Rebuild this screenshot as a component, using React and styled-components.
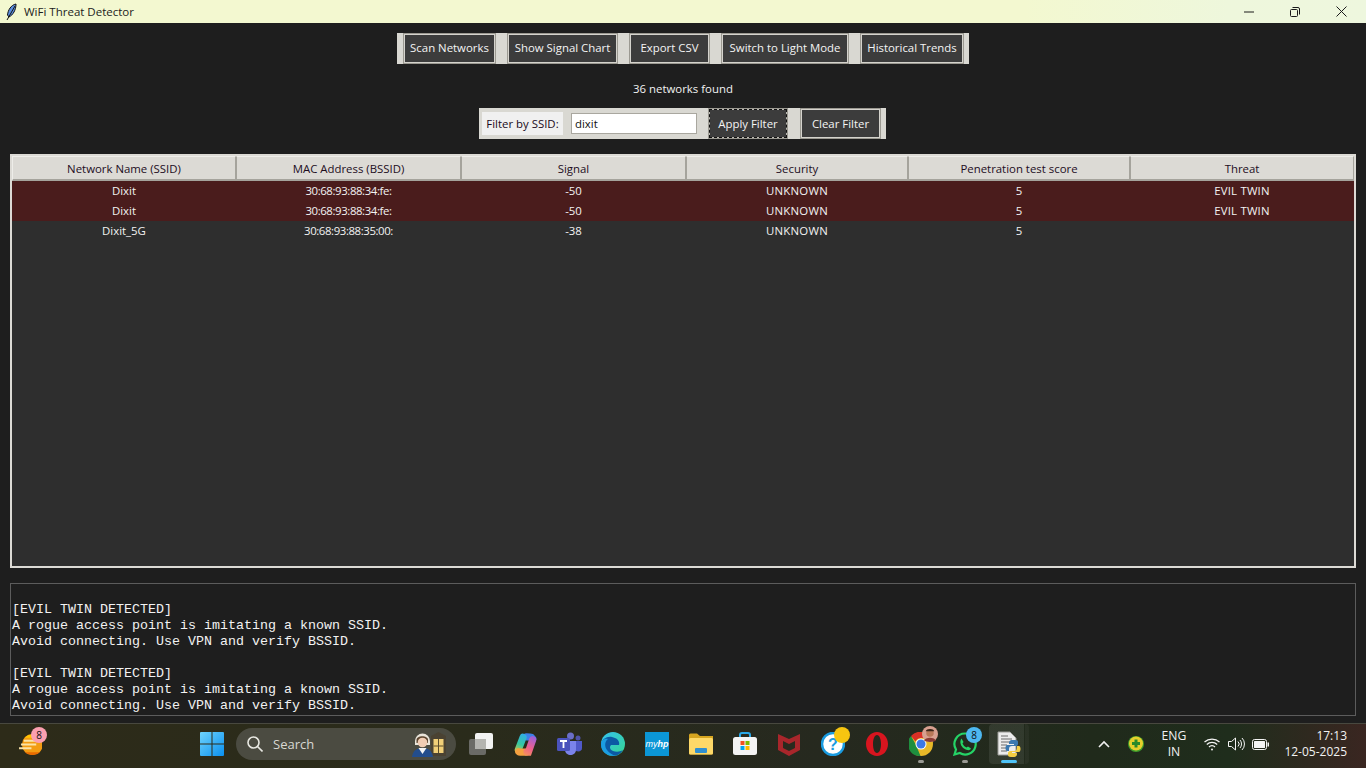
import React from 'react';
import styled, { createGlobalStyle } from 'styled-components';

const Global = createGlobalStyle`
  html, body { margin: 0; padding: 0; overflow: hidden; }
  body { font-family: "Open Sans", "Liberation Sans", sans-serif; font-size: 11.4px; }
`;

const columns = [
  { title: 'Network Name (SSID)', width: 224, spacing: 0 },
  { title: 'MAC Address (BSSID)', width: 225, spacing: -0.4 },
  { title: 'Signal', width: 225, spacing: 0 },
  { title: 'Security', width: 222, spacing: 0.25 },
  { title: 'Penetration test score', width: 222, spacing: 0 },
  { title: 'Threat', width: 224, spacing: 0.2 },
];

const rows = [
  { cells: ['Dixit', '30:68:93:88:34:fe:', '-50', 'UNKNOWN', '5', 'EVIL TWIN'], evil: true },
  { cells: ['Dixit', '30:68:93:88:34:fe:', '-50', 'UNKNOWN', '5', 'EVIL TWIN'], evil: true },
  { cells: ['Dixit_5G', '30:68:93:88:35:00:', '-38', 'UNKNOWN', '5', ''], evil: false },
];

const logLines = [
  '',
  '[EVIL TWIN DETECTED]',
  'A rogue access point is imitating a known SSID.',
  'Avoid connecting. Use VPN and verify BSSID.',
  '',
  '[EVIL TWIN DETECTED]',
  'A rogue access point is imitating a known SSID.',
  'Avoid connecting. Use VPN and verify BSSID.',
];

const Page = styled.div`
  width: 1366px;
  height: 768px;
  display: flex;
  flex-direction: column;
  background: #1e1e1e;
`;

// Title bar
const TitleBar = styled.div`
  height: 23px;
  flex: none;
  display: flex;
  align-items: center;
  padding-left: 5px;
  background: linear-gradient(90deg, #f3f8d0 0%, #f3f8d0 75%, #eef7dc 90%, #eef7de 100%);
  color: #1c1c1c;
`;

const AppTitle = styled.span`
  margin-left: 5px;
  font-size: 11.5px;
`;

const WindowButtons = styled.div`
  margin-left: auto;
  padding-right: 2px;
  display: flex;
`;

const WindowButton = styled.div`
  width: 46px;
  height: 23px;
  display: flex;
  align-items: center;
  justify-content: center;
`;

// Main area
const Main = styled.main`
  flex: 1;
  min-height: 0;
  display: flex;
  flex-direction: column;
  align-items: center;
  padding: 10px 10px 7px;
`;

const ToolButton = styled.button`
  box-sizing: border-box;
  height: 31px;
  width: ${p => p.$w}px;
  padding: 0;
  font: inherit;
  color: #f4f4f4;
  background: #3c3c3c;
  border: 1px solid #9b9991;
  box-shadow: inset 0 0 0 1px ${p => (p.$focus ? '#b9b7b0' : '#d5d3cd')};
  outline: ${p => (p.$focus ? '1px dashed #111' : 'none')};
  outline-offset: -2px;
`;

const ButtonBar = styled.div`
  display: flex;
  height: 31px;
  gap: 11px;
  padding: 0 5px 0 6px;
  background: #d9d8d2;

  ${ToolButton} {
    padding-bottom: 2px;
  }
`;

const FilterBar = styled.div`
  display: flex;
  align-items: stretch;
  height: 31px;
  padding-right: 5px;
  background: #d9d8d2;
  margin: 11px 1px 0 0;
`;

const Status = styled.div`
  margin-top: 17px;
  height: 16px;
  line-height: 16px;
  color: #f2f2f2;
`;

const FilterLabel = styled.label`
  box-sizing: border-box;
  width: 81px;
  margin: 4px 8px 4px 3px;
  display: flex;
  align-items: center;
  justify-content: center;
  background: #f0f0f0;
  color: #1a0a1a;
`;

const FilterInput = styled.input`
  box-sizing: border-box;
  width: 126px;
  height: 21px;
  margin: 5px 11px 5px 0;
  padding: 0 3px;
  font: inherit;
  color: #111;
  background: #fff;
  border: 1px solid #a9a79f;
  outline: none;
`;

const ClearButton = styled(ToolButton)`
  margin-left: 12px;
`;

// Table
const Table = styled.div`
  box-sizing: border-box;
  width: 1346px;
  height: 414px;
  margin-top: 15px;
  border: 2px solid #dcdad5;
  background: #2e2e2e;
`;

const HeadRow = styled.div`
  display: flex;
  height: 25px;
`;

const HeadCell = styled.div`
  box-sizing: border-box;
  width: ${p => p.$w}px;
  display: flex;
  align-items: center;
  justify-content: center;
  background: #dcdad5;
  color: #1d0d1d;
  border: 1px solid #eeede9;
  border-left-color: #a5a39c;
  border-right-color: #a5a39c;
  border-bottom: 2px solid #a5a39c;

  &:first-child {
    border-left-color: #eeede9;
  }
`;

const Row = styled.div`
  display: flex;
  height: 20px;
  background: ${p => (p.$evil ? '#4a1c1c' : '#2e2e2e')};
`;

const Cell = styled.div`
  width: ${p => p.$w}px;
  line-height: 20px;
  text-align: center;
  color: #f2f2f2;
  letter-spacing: ${p => p.$spacing}px;
`;

// Log panel
const Log = styled.pre`
  box-sizing: border-box;
  width: 1346px;
  height: 133px;
  margin: 15px 0 0;
  padding: 2px 1px 0;
  overflow: hidden;
  border: 1px solid #5c5c5c;
  background: #1e1e1e;
  color: #f2f2f2;
  font: 13.33px/16px "Liberation Mono", monospace;
`;

// Taskbar
const Taskbar = styled.footer`
  box-sizing: border-box;
  height: 45px;
  flex: none;
  display: grid;
  grid-template-columns: 190px auto 1fr auto;
  align-items: center;
  padding-bottom: 4px;
  border-top: 1px solid #48483f;
  background: linear-gradient(90deg, #2d2b19 0%, #2a2b1b 35%, #26291f 60%, #202a1b 80%, #1f2d1c 90%, #3a2621 100%);
`;

const Widgets = styled.div`
  position: relative;
  margin-left: 19px;
  width: 28px;
  height: 24px;
  display: flex;
  align-items: center;
`;

const Badge = styled.span`
  position: absolute;
  top: ${p => p.$top}px;
  right: ${p => p.$right}px;
  width: 16px;
  height: 16px;
  border-radius: 50%;
  background: ${p => p.$bg};
  color: #111;
  font-size: 10px;
  line-height: 16px;
  text-align: center;
`;

const CenterIcons = styled.div`
  display: flex;
  align-items: center;
`;

const IconSlot = styled.div`
  position: relative;
  box-sizing: border-box;
  width: ${p => (p.$active ? 40 : 44)}px;
  margin: ${p => (p.$active ? '0 2px' : '0')};
  height: 40px;
  display: flex;
  align-items: center;
  justify-content: center;
  border-radius: 4px;
  background: ${p => (p.$active
    ? 'linear-gradient(90deg, rgba(255,255,255,0.08) 35px, transparent 35px, transparent 36px, rgba(255,255,255,0.04) 36px)'
    : 'transparent')};
`;

const RunDot = styled.span`
  position: absolute;
  bottom: 1px;
  left: 50%;
  width: ${p => (p.$active ? 16 : 6)}px;
  height: 3px;
  margin-left: ${p => (p.$active ? -8 : -3)}px;
  border-radius: 2px;
  background: ${p => (p.$active ? '#4fc3f7' : '#9a9a94')};
`;

const SearchBox = styled.div`
  box-sizing: border-box;
  width: 220px;
  height: 32px;
  margin: 0 3px 0 2px;
  padding: 0 10px 0 11px;
  display: flex;
  align-items: center;
  border-radius: 16px;
  background: #4b4b41;
  color: #d8d8d2;
  font-size: 13px;
`;

const SearchText = styled.span`
  margin-left: 10px;
  flex: 1;
`;

const AvatarSpot = styled.span`
  position: absolute;
  top: 2px;
  right: 5px;
  height: 16px;
`;

const Tray = styled.div`
  grid-column: 4;
  display: flex;
  align-items: center;
  color: #f2f2f2;
`;

const TrayIcon = styled.div`
  width: ${p => p.$w}px;
  display: flex;
  justify-content: center;
`;

const Lang = styled.div`
  width: 44px;
  margin-right: 4px;
  font-size: 12.2px;
  line-height: 16px;
  text-align: center;
`;

const Clock = styled.div`
  width: 75px;
  margin-right: 19px;
  font-size: 12px;
  line-height: 16px;
  text-align: right;
`;

const Feather = () => (
  <svg width="14" height="18" viewBox="0 0 14 18">
    <path d="M11 1C6 2 3 7 2.500 12L4 14C8 12 11 7 11 1Z" fill="#5b8ee0" stroke="#111" strokeWidth="1" />
    <path d="M10 3L2 17" stroke="#111" strokeWidth="1" />
  </svg>
);

const Minimize = () => (
  <svg width="10" height="10" viewBox="0 0 10 10"><path d="M0 5H10" stroke="#1a1a1a" /></svg>
);

const Restore = () => (
  <svg width="10" height="10" viewBox="0 0 10 10" fill="none" stroke="#1a1a1a">
    <rect x="0.500" y="2.500" width="7" height="7" rx="1" />
    <path d="M2.500 0.500H8A1.500 1.500 0 0 1 9.500 2V7.500" />
  </svg>
);

const CloseX = () => (
  <svg width="11" height="11" viewBox="0 0 11 11"><path d="M0.500 0.500L10.500 10.500M10.500 0.500L0.500 10.500" stroke="#1a1a1a" /></svg>
);

const WeatherIcon = () => (
  <svg width="23" height="21" viewBox="0 0 24 22">
    <circle cx="14" cy="11" r="11" fill="#f39c12" />
    <path d="M6 4A11 11 0 0 1 22 4Z" fill="#ffc400" />
    <path d="M6 19H22A11 11 0 0 1 14 22 11 11 0 0 1 6 19Z" fill="#e86a00" />
    <path d="M5 7H23M2 11H18M0 15H13" stroke="#fbe3a6" strokeWidth="2" />
  </svg>
);

const WindowsLogo = () => (
  <svg width="24" height="24" viewBox="0 0 24 24">
    <defs>
      <linearGradient id="win" x1="0" y1="0" x2="1" y2="1">
        <stop offset="0" stopColor="#6fd3fb" />
        <stop offset="1" stopColor="#0a90f0" />
      </linearGradient>
    </defs>
    <path d="M0 1A1 1 0 0 1 1 0H11.500V11.500H0ZM12.500 0H23A1 1 0 0 1 24 1V11.500H12.500ZM0 12.500H11.500V24H1A1 1 0 0 1 0 23ZM12.500 12.500H24V23A1 1 0 0 1 23 24H12.500Z" fill="url(#win)" />
  </svg>
);

const SearchGlass = () => (
  <svg width="16" height="16" viewBox="0 0 16 16" fill="none" stroke="#e8e8e2" strokeWidth="1.600">
    <circle cx="6.500" cy="6.500" r="5.500" />
    <path d="M10.500 10.500L15.500 15.500" />
  </svg>
);

const SearchArt = () => (
  <svg width="34" height="25" viewBox="0 0 34 25">
    <path d="M19 4L26.500 0 34 4V24H19Z" fill="#4a4232" />
    <rect x="21.500" y="7" width="10" height="14" fill="#f0cf78" />
    <path d="M26.500 7V21M21.500 14H31.500" stroke="#5a4c2c" />
    <path d="M3 9A7.500 7.500 0 0 1 18 9L18 13H3Z" fill="#e8e4da" />
    <path d="M4.500 8C4.500 3 16 3 16 8V11H4.500Z" fill="#5d4630" />
    <circle cx="10.500" cy="10.500" r="4.800" fill="#f1cdb4" />
    <path d="M0 25C1 18 5 16 10.500 16S20 18 21 25Z" fill="#234d8c" />
    <path d="M6.500 16L10.500 22 14.500 16Z" fill="#f4f4f4" />
  </svg>
);

const TaskViewIcon = () => (
  <svg width="24" height="24" viewBox="0 0 24 24">
    <rect x="0" y="7" width="17" height="16" rx="2" fill="#6a6a66" />
    <rect x="6" y="1" width="18" height="16" rx="2" fill="#f2f2f2" />
    <rect x="6" y="7" width="11" height="10" fill="#b4b4b0" />
  </svg>
);

const CopilotIcon = () => (
  <svg width="23" height="23" viewBox="0 0 24 24" fill="none" strokeWidth="7.500" strokeLinecap="round">
    <defs>
      <linearGradient id="cpl" gradientUnits="userSpaceOnUse" x1="12" y1="0" x2="3" y2="22">
        <stop offset="0" stopColor="#2fa8f0" />
        <stop offset="0.550" stopColor="#35c8a0" />
        <stop offset="1" stopColor="#f4c430" />
      </linearGradient>
      <linearGradient id="cpr" gradientUnits="userSpaceOnUse" x1="10" y1="24" x2="22" y2="2">
        <stop offset="0" stopColor="#f59a50" />
        <stop offset="0.400" stopColor="#f0608a" />
        <stop offset="1" stopColor="#8a60ea" />
      </linearGradient>
    </defs>
    <path d="M19.500 6L18 4.500C17 4 15 4 13 4" stroke="#3d7fe8" />
    <path d="M9.500 4.500L4.500 17.500" stroke="url(#cpl)" />
    <path d="M5 19.500C6 20 8 20 12 20" stroke="#f4a040" />
    <path d="M13.500 20H15L19.500 7" stroke="url(#cpr)" />
  </svg>
);

const TeamsIcon = () => (
  <svg width="25" height="24" viewBox="0 0 25 24">
    <circle cx="13.500" cy="4" r="3.500" fill="#6a6ec8" />
    <circle cx="21" cy="6" r="2.500" fill="#4f53a8" />
    <path d="M8 9H19V18C19 21 16 23 13.500 23S8 21 8 18Z" fill="#7b83eb" />
    <path d="M19 9H25V16C25 19 22 20 19 19Z" fill="#5059c9" />
    <rect x="0" y="6" width="13" height="13" rx="1.500" fill="#4b53bc" />
    <path d="M3 9H10M6.500 9V16" stroke="#fff" strokeWidth="1.800" />
  </svg>
);

const EdgeIcon = () => (
  <svg width="24" height="24" viewBox="0 0 24 24">
    <defs>
      <linearGradient id="edg" x1="0" y1="0" x2="1" y2="1">
        <stop offset="0" stopColor="#35c1f1" />
        <stop offset="1" stopColor="#36d68f" />
      </linearGradient>
    </defs>
    <circle cx="12" cy="12" r="12" fill="url(#edg)" />
    <path d="M0 12C1 7 6 4 11 5 16 6 19 9 18 13H10C8 15 9 18 12 19 15 20 19 20 22 18 19 23 14 25 9 23 4 21 0 17 0 12Z" fill="#0c59a4" />
    <path d="M0 12C0 9 3 6 7 7 4 9 3 14 6 18 9 22 13 24 16 23 11 25 5 23 2 19 1 17 0 15 0 12Z" fill="#1b9de2" />
  </svg>
);

const MyHpIcon = () => (
  <svg width="24" height="24" viewBox="0 0 24 24">
    <rect width="24" height="24" fill="#0b96d6" />
    <text x="12" y="15" textAnchor="middle" fontSize="9" fontStyle="italic" fontFamily="Liberation Sans, sans-serif" fill="#fff">
      my<tspan fontWeight="700">hp</tspan>
    </text>
  </svg>
);

const FolderIcon = () => (
  <svg width="24" height="22" viewBox="0 0 24 22">
    <path d="M0 2A1.500 1.500 0 0 1 1.500 0.500H8L11 3H24V20A1.500 1.500 0 0 1 22.500 21.500H1.500A1.500 1.500 0 0 1 0 20Z" fill="#d6a520" />
    <rect x="0" y="5" width="24" height="16.500" rx="1.500" fill="#fdd868" />
    <rect x="6" y="15" width="12" height="5" rx="1" fill="#2f8fd0" />
  </svg>
);

const StoreIcon = () => (
  <svg width="24" height="24" viewBox="0 0 24 24">
    <path d="M7 6V3A2 2 0 0 1 9 1H15A2 2 0 0 1 17 3V6" fill="none" stroke="#29a8e8" strokeWidth="2" />
    <rect x="0" y="5" width="24" height="18" rx="2.500" fill="#f4f4f4" />
    <rect x="7.500" y="9" width="4" height="4" fill="#f25022" />
    <rect x="12.500" y="9" width="4" height="4" fill="#7fba00" />
    <rect x="7.500" y="14" width="4" height="4" fill="#00a4ef" />
    <rect x="12.500" y="14" width="4" height="4" fill="#ffb900" />
  </svg>
);

const McAfeeIcon = () => (
  <svg width="22" height="24" viewBox="0 0 22 24">
    <path d="M0 2L11 7 22 2V18L11 24 0 18Z" fill="#a8262b" />
    <path d="M5 9L11 12 17 9V16L11 19 5 16Z" fill="#2a2a1e" />
  </svg>
);

const HelpIcon = () => (
  <svg width="24" height="24" viewBox="0 0 24 24">
    <circle cx="12" cy="12" r="11" fill="#fff" stroke="#1a9be0" strokeWidth="2.500" />
    <text x="12" y="18" textAnchor="middle" fontSize="16" fontWeight="700" fontFamily="Liberation Sans, sans-serif" fill="#1a9be0">?</text>
  </svg>
);

const OperaIcon = () => (
  <svg width="22" height="24" viewBox="0 0 22 24">
    <path fillRule="evenodd" d="M11 0C17 0 22 5 22 12S17 24 11 24 0 19 0 12 5 0 11 0ZM11 3C8.500 3 7 7 7 12S8.500 21 11 21 15 17 15 12 13.500 3 11 3Z" fill="#d8151f" />
  </svg>
);

const ChromeIcon = () => (
  <svg width="24" height="24" viewBox="0 0 24 24">
    <circle cx="12" cy="12" r="12" fill="#e8b828" />
    <path d="M12 0A12 12 0 0 1 22.400 6H12C9 6 7 8 6.500 9.500L2 4A12 12 0 0 1 12 0Z" fill="#d93025" />
    <path d="M2 4L7 13 11.500 24A12 12 0 0 1 2 4Z" fill="#1e8e3e" />
    <circle cx="12" cy="12" r="5.500" fill="#fff" />
    <circle cx="12" cy="12" r="4.500" fill="#3b78e7" />
  </svg>
);

const Avatar = () => (
  <svg width="16" height="16" viewBox="0 0 15 15">
    <circle cx="7.500" cy="7.500" r="7.500" fill="#d8a090" />
    <circle cx="7.500" cy="6.500" r="3.500" fill="#b87858" />
    <path d="M3.500 5C4 2 11 2 11.500 5Z" fill="#3a2418" />
    <path d="M2 14C3 10 12 10 13 14L7.500 15Z" fill="#8a3a34" />
  </svg>
);

const WhatsAppIcon = () => (
  <svg width="24" height="24" viewBox="0 0 24 24">
    <path d="M12 1.500A10.500 10.500 0 0 0 3 17.500L1.500 22.500 6.800 21A10.500 10.500 0 1 0 12 1.500Z" fill="none" stroke="#25d366" strokeWidth="2.200" />
    <path d="M8.500 6.500L10.500 10 9.500 11.500C10.500 13.500 11.500 14.500 13.500 15.500L15 14.500 18 16.500C17 19 14 18.500 11 16.500 8 14.500 6 10 8.500 6.500Z" fill="#25d366" />
  </svg>
);

const PythonFileIcon = () => (
  <svg width="24" height="26" viewBox="0 0 24 26">
    <path d="M1 1H13L19 7V24H1Z" fill="#ececec" stroke="#9a9a96" />
    <path d="M4 5H11M4 8H15M4 11H15M4 14H10M4 17H10M4 20H10" stroke="#6a6a6a" />
    <path d="M16 9C12 9 12 11 12 13H17V14H10C8 14 8 20 10 20H12V18C12 16 13 15 15 15H19C20 15 21 14 21 13V11C21 9 19 9 16 9Z" fill="#3a78b0" />
    <path d="M16 26C20 26 20 24 20 22H15V21H22C24 21 24 15 22 15H20V17C20 19 19 20 17 20H13C12 20 11 21 11 22V24C11 26 13 26 16 26Z" fill="#f5cf45" />
  </svg>
);

const ChevronUp = () => (
  <svg width="12" height="8" viewBox="0 0 12 8" fill="none" stroke="#f0f0f0" strokeWidth="1.600"><path d="M1 7L6 2 11 7" /></svg>
);

const GreenTray = () => (
  <svg width="16" height="16" viewBox="0 0 16 16">
    <circle cx="8" cy="8" r="8" fill="#3f9d2c" />
    <circle cx="8" cy="7.500" r="7" fill="#e6cf2c" />
    <path d="M6.500 3.500H9.500V6H12V9H9.500V11.500H6.500V9H4V6H6.500Z" fill="#2a8a2a" />
  </svg>
);

const WifiIcon = () => (
  <svg width="16" height="14" viewBox="0 0 16 14" fill="none" stroke="#f4f4f4" strokeWidth="1.200">
    <path d="M0.500 5A11 11 0 0 1 15.500 5M2.800 7.500A7.500 7.500 0 0 1 13.200 7.500M5 10A4 4 0 0 1 11 10" />
    <circle cx="8" cy="12.500" r="1" fill="#f4f4f4" stroke="none" />
  </svg>
);

const VolumeIcon = () => (
  <svg width="17" height="14" viewBox="0 0 17 14" fill="none" stroke="#f4f4f4" strokeWidth="1">
    <path d="M0.500 4.500H3.500L7.500 1V13L3.500 9.500H0.500Z" />
    <path d="M10 4.500A3.500 3.500 0 0 1 10 9.500M12 3A6 6 0 0 1 12 11M14 1A8.500 8.500 0 0 1 14 13" />
  </svg>
);

const BatteryIcon = () => (
  <svg width="17" height="11" viewBox="0 0 17 11">
    <rect x="0.500" y="0.500" width="14" height="10" rx="2" fill="none" stroke="#f4f4f4" />
    <rect x="2" y="2" width="11" height="7" rx="0.500" fill="#f4f4f4" />
    <rect x="15.500" y="3.500" width="1.500" height="4" fill="#f4f4f4" />
  </svg>
);

const pinned = [
  { key: 'task', icon: <TaskViewIcon /> },
  { key: 'copilot', icon: <CopilotIcon /> },
  { key: 'teams', icon: <TeamsIcon /> },
  { key: 'edge', icon: <EdgeIcon /> },
  { key: 'myhp', icon: <MyHpIcon /> },
  { key: 'folder', icon: <FolderIcon /> },
  { key: 'store', icon: <StoreIcon /> },
  { key: 'mcafee', icon: <McAfeeIcon /> },
  { key: 'help', icon: <HelpIcon />, badge: <Badge $bg="#f7c510" $top={3} $right={5} /> },
  { key: 'opera', icon: <OperaIcon /> },
  { key: 'chrome', icon: <ChromeIcon />, run: true, avatar: true },
  { key: 'whatsapp', icon: <WhatsAppIcon />, run: true, badge: <Badge $bg="#4db8f0" $top={3} $right={5}>8</Badge> },
  { key: 'python', icon: <PythonFileIcon />, active: true },
];

export default function App() {
  return (
    <Page>
      <Global />
      <TitleBar>
        <Feather />
        <AppTitle>WiFi Threat Detector</AppTitle>
        <WindowButtons>
          <WindowButton><Minimize /></WindowButton>
          <WindowButton><Restore /></WindowButton>
          <WindowButton><CloseX /></WindowButton>
        </WindowButtons>
      </TitleBar>

      <Main>
        <ButtonBar>
          <ToolButton $w={93}>Scan Networks</ToolButton>
          <ToolButton $w={111}>Show Signal Chart</ToolButton>
          <ToolButton $w={81}>Export CSV</ToolButton>
          <ToolButton $w={128}>Switch to Light Mode</ToolButton>
          <ToolButton $w={104}>Historical Trends</ToolButton>
        </ButtonBar>
        <Status>36 networks found</Status>
        <FilterBar>
          <FilterLabel>Filter by SSID:</FilterLabel>
          <FilterInput defaultValue="dixit" />
          <ToolButton $w={80} $focus>Apply Filter</ToolButton>
          <ClearButton $w={81}>Clear Filter</ClearButton>
        </FilterBar>

        <Table>
          <HeadRow>
            {columns.map(c => <HeadCell key={c.title} $w={c.width}>{c.title}</HeadCell>)}
          </HeadRow>
          {rows.map((r, i) => (
            <Row key={i} $evil={r.evil}>
              {r.cells.map((text, j) => (
                <Cell key={j} $w={columns[j].width} $spacing={columns[j].spacing}>{text}</Cell>
              ))}
            </Row>
          ))}
        </Table>

        <Log>{logLines.join('\n')}</Log>
      </Main>

      <Taskbar>
        <Widgets>
          <WeatherIcon />
          <Badge $bg="#fb9fb0" $top={-5} $right={0}>8</Badge>
        </Widgets>
        <CenterIcons>
          <IconSlot><WindowsLogo /></IconSlot>
          <SearchBox>
            <SearchGlass />
            <SearchText>Search</SearchText>
            <SearchArt />
          </SearchBox>
          {pinned.map(p => (
            <IconSlot key={p.key} $active={p.active}>
              {p.icon}
              {p.badge}
              {p.avatar && <AvatarSpot><Avatar /></AvatarSpot>}
              {(p.run || p.active) && <RunDot $active={p.active} />}
            </IconSlot>
          ))}
        </CenterIcons>
        <Tray>
          <TrayIcon $w={32}><ChevronUp /></TrayIcon>
          <TrayIcon $w={32}><GreenTray /></TrayIcon>
          <Lang>ENG<br />IN</Lang>
          <TrayIcon $w={24}><WifiIcon /></TrayIcon>
          <TrayIcon $w={24}><VolumeIcon /></TrayIcon>
          <TrayIcon $w={24}><BatteryIcon /></TrayIcon>
          <Clock>17:13<br />12-05-2025</Clock>
        </Tray>
      </Taskbar>
    </Page>
  );
}
